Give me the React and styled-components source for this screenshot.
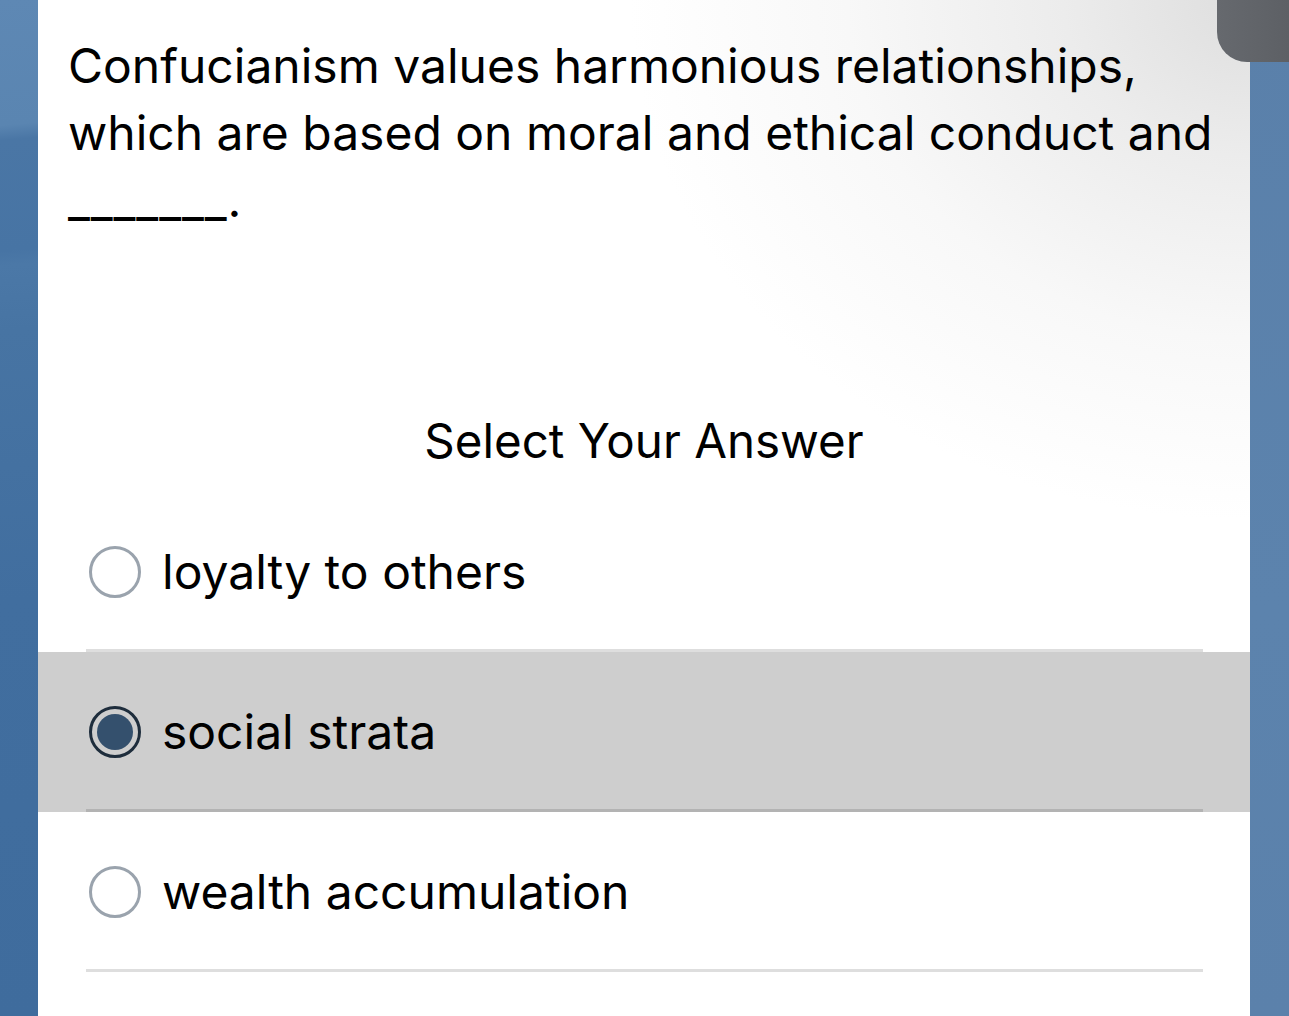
import React from "react";
import styled, { createGlobalStyle } from "styled-components";

const Global = createGlobalStyle`
  html, body { margin: 0; padding: 0; }
  body { font-family: Inter, "Noto Sans", "Liberation Sans", sans-serif; overflow: hidden; }
`;

const Page = styled.div`
  position: relative;
  display: grid;
  grid-template-columns: 38px 1fr 39px;
  width: 1289px;
  height: 1016px;
  overflow: hidden;
`;

const SideStrip = styled.div`
  background: ${(p) =>
    p.$side === "left"
      ? "linear-gradient(175deg, #5e88b4 0px, #5a85b1 125px, #4a76a5 140px, #4774a4 250px, #4b78a7 265px, #4774a3 330px, #416e9f 600px, #3f6c9d 1016px)"
      : "linear-gradient(180deg, #5a80aa 0%, #5c83ad 60%, #5b81ab 100%)"};
`;

const Corner = styled.div`
  position: absolute;
  top: 0;
  right: 0;
  width: 72px;
  height: 62px;
  background: linear-gradient(90deg, #66696e, #5d6065);
  border-bottom-left-radius: 30px;
`;

const Panel = styled.main`
  display: flex;
  flex-direction: column;
  background: radial-gradient(ellipse 620px 520px at 100% 0%, #dedede 0%, #ececec 30%, #f8f8f8 65%, #ffffff 100%), #ffffff;
  padding-top: 32px;
`;

const Question = styled.p`
  margin: 0;
  padding: 0 20px 0 30px;
  font-size: 48px;
  line-height: 67px;
  color: #000;
`;

const Blank = styled.span`
  letter-spacing: 0.9px;
`;

const Heading = styled.h2`
  margin: 180px 0 23px;
  text-align: center;
  font-weight: 400;
  font-size: 47.5px;
  line-height: 56px;
  color: #000;
`;

const Options = styled.div`
  display: flex;
  flex-direction: column;
`;

const Row = styled.label`
  display: flex;
  flex-direction: column;
  height: 160px;
  background: ${(p) => (p.$selected ? "#cecece" : "transparent")};
`;

const RowBody = styled.div`
  flex: 1;
  display: flex;
  align-items: center;
  gap: 21px;
  padding-left: 51px;
  padding-top: 3px;
`;

const Divider = styled.div`
  height: 3px;
  margin: 0 47px 0 48px;
  background: rgba(0, 0, 0, 0.13);
`;

const Radio = styled.span`
  box-sizing: border-box;
  width: 52px;
  height: 52px;
  border-radius: 50%;
  flex: none;
  border: 3px solid ${(p) => (p.$checked ? "#1e2d3c" : "#9aa3ad")};
  display: flex;
  align-items: center;
  justify-content: center;
`;

const Dot = styled.span`
  width: 36px;
  height: 36px;
  border-radius: 50%;
  background: #34506d;
`;

const OptionText = styled.span`
  font-size: 48px;
  line-height: 56px;
  color: #000;
`;

const options = [
  { text: "loyalty to others", selected: false },
  { text: "social strata", selected: true },
  { text: "wealth accumulation", selected: false },
];

export default function App() {
  return (
    <>
      <Global />
      <Page>
        <SideStrip $side="left" />
        <Panel>
          <Question>
            Confucianism values harmonious relationships, which are based on moral and ethical conduct and <Blank>_______</Blank>.
          </Question>
          <Heading>Select Your Answer</Heading>
          <Options>
            {options.map((o) => (
              <Row key={o.text} $selected={o.selected}>
                <RowBody>
                  <Radio $checked={o.selected}>{o.selected && <Dot />}</Radio>
                  <OptionText>{o.text}</OptionText>
                </RowBody>
                <Divider />
              </Row>
            ))}
          </Options>
        </Panel>
        <SideStrip $side="right" />
        <Corner />
      </Page>
    </>
  );
}
